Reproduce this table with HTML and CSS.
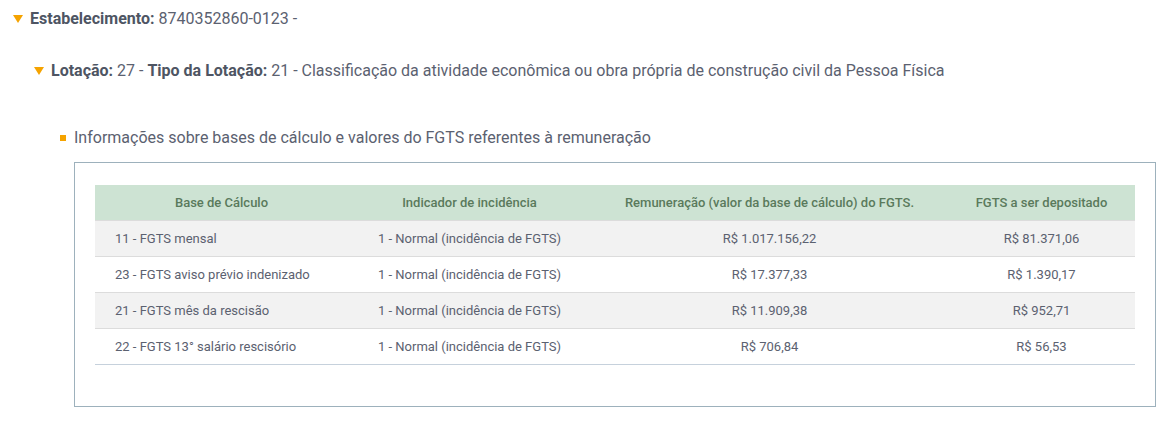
FILE: index.html
```html
<!DOCTYPE html>
<html lang="pt-BR">
<head>
	<meta charset="UTF-8">
	<title>Estabelecimento</title>
	<link rel="stylesheet" href="styles.css">
</head>
<body>
	<div class="estab">
		<div class="titulo"><span class="seta"></span><b>Estabelecimento:</b>&nbsp;8740352860-0123 -</div>
		<div class="lotacao">
			<div class="titulo"><span class="seta"></span><b>Lotação:</b>&nbsp;27 -&nbsp;<b>Tipo da Lotação:</b>&nbsp;21 - Classificação da atividade econômica ou obra própria de construção civil da Pessoa Física</div>
			<div class="info">
				<div class="subtitulo"><span class="quad"></span>Informações sobre bases de cálculo e valores do FGTS referentes à remuneração</div>
				<div class="caixa">
					<table>
						<colgroup>
							<col class="c1"><col class="c2"><col class="c3"><col class="c4">
						</colgroup>
						<thead>
							<tr>
								<th>Base de Cálculo</th>
								<th>Indicador de incidência</th>
								<th>Remuneração (valor da base de cálculo) do FGTS.</th>
								<th>FGTS a ser depositado</th>
							</tr>
						</thead>
						<tbody>
							<tr>
								<td class="esq">11 - FGTS mensal</td>
								<td>1 - Normal (incidência de FGTS)</td>
								<td>R$ 1.017.156,22</td>
								<td>R$ 81.371,06</td>
							</tr>
							<tr>
								<td class="esq">23 - FGTS aviso prévio indenizado</td>
								<td>1 - Normal (incidência de FGTS)</td>
								<td>R$ 17.377,33</td>
								<td>R$ 1.390,17</td>
							</tr>
							<tr>
								<td class="esq">21 - FGTS mês da rescisão</td>
								<td>1 - Normal (incidência de FGTS)</td>
								<td>R$ 11.909,38</td>
								<td>R$ 952,71</td>
							</tr>
							<tr>
								<td class="esq">22 - FGTS 13° salário rescisório</td>
								<td>1 - Normal (incidência de FGTS)</td>
								<td>R$ 706,84</td>
								<td>R$ 56,53</td>
							</tr>
						</tbody>
					</table>
				</div>
			</div>
		</div>
	</div>
</body>
</html>
```

FILE: styles.css
```css
*{margin:0;padding:0;box-sizing:border-box;}
body{font-family:Roboto,"Liberation Sans",Arial,sans-serif;color:#5b6170;background:#fff;}
b{color:#4e5563;font-weight:700;}
.estab{padding:9px 0 0 13px;}
.titulo{display:flex;align-items:center;font-size:16px;line-height:20px;}
.seta{width:0;height:0;border-left:5px solid transparent;border-right:5px solid transparent;border-top:8px solid #f5a300;margin-right:7px;}
.lotacao{padding:32px 0 0 21px;}
.info{padding:47px 0 0 26px;}
.subtitulo{display:flex;align-items:center;font-size:16px;line-height:20px;}
.quad{width:6px;height:6px;background:#f5a300;margin-right:8px;}
.caixa{margin:14px 0 0 14px;border:1px solid #9db1bc;padding:22px 20px 41px 20px;width:1082px;}
table{width:1040px;border-collapse:collapse;table-layout:fixed;font-size:13px;}
.c1{width:253px;}
.c2{width:243px;}
.c3{width:357px;}
.c4{width:187px;}
th{background:#cde3d3;color:#5a7a5c;font-weight:500;font-size:13px;height:35px;text-align:center;border-bottom:1px solid #dcdcdc;}
td{height:36px;text-align:center;border-bottom:1px solid #dcdcdc;}
td.esq{text-align:left;padding-left:20px;}
tbody tr:nth-child(odd) td{background:#f2f2f2;}
tbody tr:last-child td{border-bottom-color:#c6d1dc;}
```
